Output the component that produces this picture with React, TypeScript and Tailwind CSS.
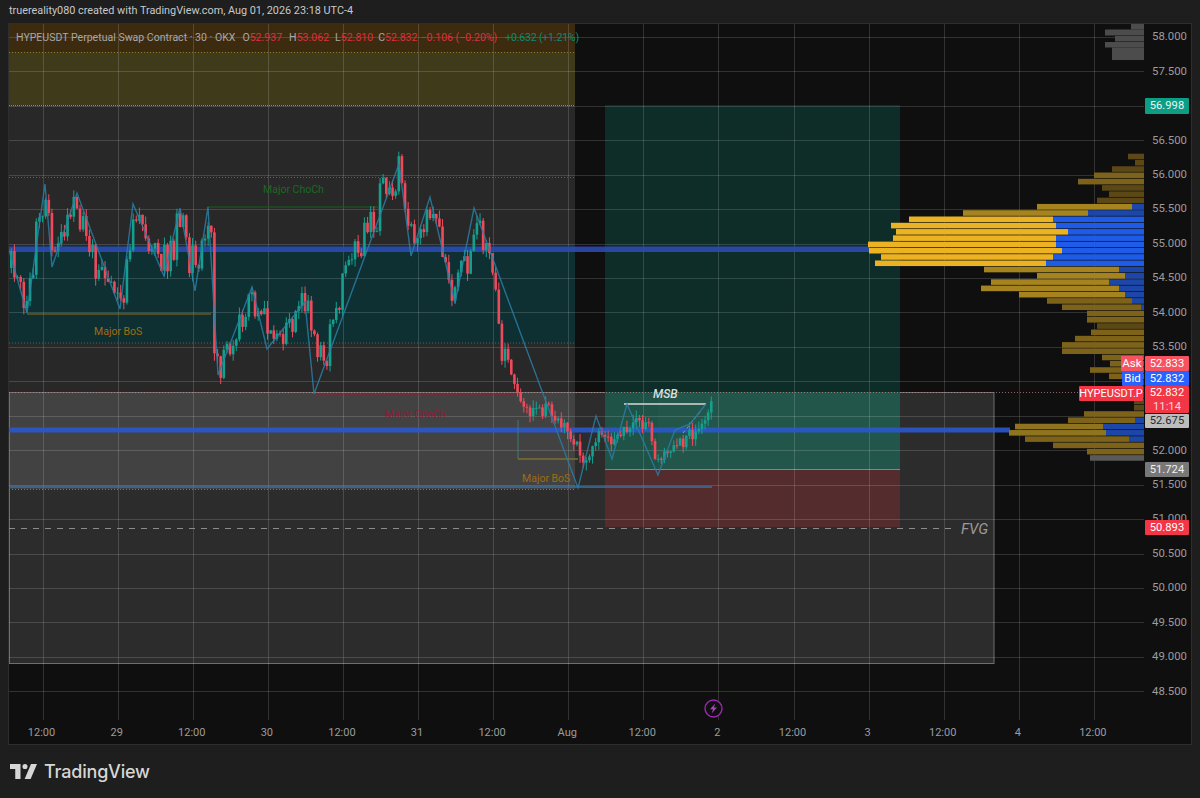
import React from 'react';

const yOf = (p: number) => 243.5 + (55 - p) * 68.9;

const priceTicks = ['58.000', '57.500', '57.000', '56.500', '56.000', '55.500', '55.000', '54.500', '54.000', '53.500', '53.000', '52.500', '52.000', '51.500', '51.000', '50.500', '50.000', '49.500', '49.000', '48.500'];
// these sit under a label in the picture
const coveredTicks = ['57.000', '53.000', '52.500'];
const timeTicks = ['12:00', '29', '12:00', '30', '12:00', '31', '12:00', 'Aug', '12:00', '2', '12:00', '3', '12:00', '4', '12:00'];
const gridX = timeTicks.map((_, i) => 42.5 + i * 75.1);

// close prices read off the chart, as [x, y] in page pixels
const track: [number, number][] = [
  [10, 268], [16, 282], [22, 290], [27, 300], [33, 258], [36, 225], [44, 205], [48, 198], [52, 255], [56, 260], [62, 225], [68, 210], [76, 203], [80, 222],
  [88, 235], [92, 265], [100, 265], [105, 280], [110, 290], [118, 298], [122, 290], [128, 260], [133, 225], [140, 215], [145, 240], [150, 250], [155, 232],
  [160, 260], [168, 255], [172, 245], [178, 220], [183, 235], [188, 260], [195, 262], [205, 245], [210, 228], [212, 320], [214, 360], [218, 372], [224, 345],
  [232, 335], [240, 315], [248, 305], [254, 300], [262, 315], [270, 322], [280, 333], [290, 330], [296, 322], [302, 305], [308, 312], [314, 350], [322, 365],
  [328, 340], [336, 310], [342, 270], [348, 255], [354, 245], [360, 245], [370, 225], [376, 215], [382, 180], [390, 183], [398, 172], [402, 205], [408, 235],
  [414, 238], [420, 230], [426, 215], [432, 200], [436, 215], [440, 245], [444, 265], [450, 285], [455, 297], [460, 275], [468, 260], [474, 225], [480, 235],
  [486, 258], [492, 280], [496, 320], [500, 350], [506, 345], [510, 365], [516, 395], [522, 403], [530, 410], [540, 410], [550, 410], [560, 425], [570, 435],
  [578, 452], [584, 460], [590, 450], [596, 430], [604, 440], [612, 445], [620, 435], [630, 425], [640, 420], [650, 432], [655, 458], [660, 465], [668, 450], [680, 442],
  [690, 436], [698, 425], [704, 415], [707, 395], [709, 383], [712, 388],
];

const at = (x: number) => {
  for (let i = 1; i < track.length; i++) {
    if (x <= track[i][0]) {
      const [x0, y0] = track[i - 1];
      const [x1, y1] = track[i];
      return y0 + ((y1 - y0) * (x - x0)) / (x1 - x0);
    }
  }
  return track[track.length - 1][1];
};

let seed = 71;
const rnd = () => {
  seed = (seed * 16807) % 2147483647;
  return seed / 2147483647;
};

const candles: { x: number; open: number; close: number; high: number; low: number }[] = [];
let last = 268;
for (let x = 10; x <= 712; x += 3.125) {
  const spread = x > 510 && x < 700 ? 16 : 34;
  const close = at(x) + (rnd() - 0.5) * spread;
  candles.push({ x, open: last, close, high: Math.min(last, close) - rnd() * 8, low: Math.max(last, close) + rnd() * 8 });
  last = close;
}

const zigzag = '9,250 27,313 45,184 52,267 77,193 120,309 133,204 164,276 180,208 195,291 208,207 218,375 252,287 267,349 305,302 314,394 399,164 411,256 430,197 455,303 474,208 578,488 596,416 612,459 627,404 658,475 675,430 690,424 706,404';

// volume profile rows from the top: left edge, start of the blue part, tone
const hi = '#ebb222';
const mid = '#a5841f';
const low = '#7d621a';
const dark = '#5c4816';
const rows: [number, number | null, string][] = [
  [1128, null, dark], [1135, null, dark], [1112, null, dark], [1094, null, low], [1078, null, low], [1102, null, dark], [1109, null, dark], [1097, null, dark],
  [1037, 1132, mid], [963, 1088, mid], [909, 1053, hi], [891, 1056, hi], [896, 1068, hi], [893, 1056, hi], [868, 1056, hi], [869, 1062, hi], [881, 1053, hi], [875, 1046, hi],
  [984, 1119, mid], [1037, 1125, mid], [991, 1109, mid], [981, 1119, mid], [1019, 1125, mid], [1047, 1132, low], [1062, 1141, low],
  [1087, null, low], [1087, null, low], [1097, null, dark], [1091, null, low], [1075, null, low], [1062, null, low], [1062, null, low],
  [1102, null, low], [1110, null, low], [1090, null, low], [1109, null, low], [1130, null, dark], [1115, null, dark], [1120, null, dark], [1134, null, dark], [1134, null, dark],
  [1084, null, low], [1068, 1135, low], [1015, 1103, '#8f7420'], [1009, 1106, '#8f7420'], [1025, 1129, low], [1053, null, low], [1087, null, low], [1090, null, '#5a5a5a'],
];
const greyRows: [number, number, number][] = [
  [24, 5.5, 1131], [29.5, 6, 1105], [36, 5.5, 1115], [42, 5.5, 1105], [47.5, 12.5, 1112],
];

const Chart = () => (
  <svg className="absolute inset-0 w-[1135px] h-[696px]" viewBox="9 24 1135 696">
    {/* zones */}
    <rect x="9" y="24" width="566" height="28" fill="#3d2b10" />
    <rect x="9" y="52" width="566" height="53" fill="#3f3a1a" />
    <rect x="9" y="105" width="566" height="384" fill="#282828" />
    <rect x="9" y="246" width="566" height="97" fill="#0e3033" />
    <rect x="605" y="105" width="295" height="364" fill="#0e2c28" />
    <rect x="9.5" y="392.5" width="984.5" height="271" fill="#ffffff" fillOpacity="0.12" stroke="#6e6e6e" />
    <rect x="605" y="392" width="295" height="77" fill="#1f5348" />
    <rect x="658" y="392" width="242" height="77" fill="#ffffff" fillOpacity="0.02" />
    <rect x="605" y="469" width="295" height="58" fill="#542c2e" />
    <line x1="605" x2="900" y1="469.5" y2="469.5" stroke="#7d8a86" />

    {/* grid */}
    {priceTicks.map((p) => (
      <line key={p} x1="9" x2="1144" y1={Math.round(yOf(parseFloat(p))) + 0.5} y2={Math.round(yOf(parseFloat(p))) + 0.5} stroke="#ffffff" strokeOpacity="0.15" />
    ))}
    {gridX.map((x) => (
      <line key={x} x1={Math.round(x) + 0.5} x2={Math.round(x) + 0.5} y1="24" y2="720" stroke="#ffffff" strokeOpacity="0.15" />
    ))}

    {/* zone borders */}
    <line x1="9" x2="575" y1="52.5" y2="52.5" stroke="#8d7d24" strokeDasharray="1 2" />
    <line x1="9" x2="575" y1="105.5" y2="105.5" stroke="#8a8a8a" strokeDasharray="1 1" />
    <line x1="9" x2="575" y1="177.5" y2="177.5" stroke="#5c5c5c" strokeDasharray="1 2" />
    <line x1="9" x2="575" y1="343" y2="343" stroke="#5c5c5c" strokeDasharray="1 2" />
    <line x1="9" x2="575" y1="489.5" y2="489.5" stroke="#777777" strokeDasharray="1 2" />
    <line x1="9" x2="1144" y1="392.5" y2="392.5" stroke="#c98a8a" strokeOpacity="0.7" strokeDasharray="1 2" />

    {/* key levels */}
    <rect x="9" y="246.5" width="860" height="5.5" fill="#2c4ab0" fillOpacity="0.9" />
    <rect x="9" y="427.5" width="1001" height="5" fill="#2a58cc" fillOpacity="0.9" />
    <line x1="9" x2="712" y1="487" y2="487" stroke="#3d6fa0" strokeWidth="1.5" />
    <line x1="9" x2="955" y1="528.5" y2="528.5" stroke="#8c8c8c" strokeDasharray="6 6" />

    {/* structure lines */}
    <line x1="207" x2="378" y1="207" y2="207" stroke="#14631c" strokeWidth="1.2" />
    <line x1="27" x2="211" y1="314" y2="314" stroke="#9a6a10" strokeWidth="1.2" />
    <line x1="315" x2="520" y1="394.5" y2="394.5" stroke="#8a1f3a" strokeOpacity="0.6" />
    <polyline points="518,420 518,459 578,459" fill="none" stroke="#3f7d72" />
    <line x1="518" x2="578" y1="459" y2="459" stroke="#9a6a10" strokeWidth="1.2" />
    <line x1="624" x2="706" y1="404" y2="404" stroke="#d8d8d8" strokeWidth="1.5" />
    <line x1="683" x2="700" y1="433" y2="412" stroke="#9a9a9a" strokeDasharray="3 3" />

    {/* candles */}
    {candles.map((c) => {
      const color = c.close <= c.open ? '#14a08e' : '#ee4a5c';
      const top = Math.min(c.open, c.close);
      return (
        <g key={c.x} fill={color}>
          <rect x={c.x + 0.8} y={c.high} width="1" height={c.low - c.high} />
          <rect x={c.x} y={top} width="2.6" height={Math.max(1, Math.abs(c.close - c.open))} />
        </g>
      );
    })}
    <polyline points={zigzag} fill="none" stroke="#2a7ca3" strokeWidth="1.4" strokeOpacity="0.85" />

    {/* volume profile */}
    {greyRows.map(([y, h, x]) => (
      <rect key={y} x={x} y={y} width={1144 - x} height={h} fill="#4c4c4c" />
    ))}
    {rows.map(([left, blue, tone], i) => {
      const y = 153.7 + i * 6.28;
      const right = blue ?? 1144;
      const bright = tone === hi;
      return (
        <g key={i}>
          <rect x={left} y={y} width={right - left} height="5.6" fill={tone} />
          {blue !== null && <rect x={blue} y={y} width={1144 - blue} height="5.6" fill={bright ? '#1e5be6' : '#1c46a8'} />}
        </g>
      );
    })}
  </svg>
);

const priceTag = 'w-[44px] flex items-center justify-center text-[11.2px] leading-none rounded-[1px]';

export default function App() {
  return (
    <div className="w-[1200px] h-[798px] flex flex-col bg-[#1e1e1e] overflow-hidden font-['Roboto',sans-serif]">
      <div className="h-[23px] pl-[9px] flex items-center text-[10.85px] text-[#c8c8c8]">
        truereality080 created with TradingView.com, Aug 01, 2026 23:18 UTC-4
      </div>

      <div className="ml-2 w-[1184px] h-[722px] border border-[#2e2e2e] bg-[#0f0f0f] relative overflow-hidden">
        <div className="flex h-[696px]">
          <div className="relative w-[1135px]">
            <Chart />
            <div className="absolute left-[7px] top-[7px] flex text-[10.55px] leading-[13px] text-[#a8a8a8] whitespace-nowrap">
              <span>HYPEUSDT Perpetual Swap Contract · 30 · OKX</span>
              <span className="ml-[7px]">O<span className="text-[#d9303f]">52.937</span></span>
              <span className="ml-[7px]">H<span className="text-[#d9303f]">53.062</span></span>
              <span className="ml-[6px]">L<span className="text-[#d9303f]">52.810</span></span>
              <span className="ml-[5px]">C<span className="text-[#d9303f]">52.832</span></span>
              <span className="ml-[3px] text-[#d9303f]">−0.106 (−0.20%)</span>
              <span className="ml-[8px] text-[#0a8a74] tracking-[-0.2px]">+0.632 (+1.21%)</span>
            </div>
            <span className="absolute left-[254px] top-[159px] text-[10.5px] leading-[13px] text-[#1a6a22]">Major ChoCh</span>
            <span className="absolute left-[85px] top-[301px] text-[10.5px] leading-[13px] text-[#a06c12]">Major BoS</span>
            <span className="absolute left-[376px] top-[384px] text-[10.5px] leading-[13px] text-[#8a1f3a]">Major ChoCh</span>
            <span className="absolute left-[513px] top-[448px] text-[10.5px] leading-[13px] text-[#a06c12]">Major BoS</span>
            <span className="absolute left-[644px] top-[363px] text-[12px] leading-[14px] italic font-medium text-[#dedede]">MSB</span>
            <span className="absolute left-[952px] top-[496px] text-[15px] leading-[18px] italic text-[#9a9a9a]">FVG</span>
            <svg className="absolute left-[695px] top-[675px] w-[19px] h-[19px]" viewBox="0 0 19 19">
              <circle cx="9.5" cy="9.5" r="8.5" fill="#0f0f0f" stroke="#9c27b0" strokeWidth="1.4" />
              <path d="M11.2 4.6 6 10.3h3l-1.4 4.1 5.3-5.8H9.8z" fill="#ab47bc" />
            </svg>
          </div>
          <div className="w-[47px] flex flex-col mt-[-4.4px] text-[11.4px] text-[#9c9c9c]">
            {priceTicks.map((p) => (
              <div key={p} className="h-[34.45px] shrink-0 flex items-center pl-[8px]">{coveredTicks.includes(p) ? '' : p}</div>
            ))}
          </div>
        </div>

        <div className="flex ml-[-5px] h-[24px] pt-[2px] items-center text-[11px] text-[#9c9c9c]">
          {timeTicks.map((t, i) => (
            <div key={i} className="w-[75.1px] shrink-0 text-center">{t}</div>
          ))}
        </div>

        {/* labels over the price axis */}
        <div className={`${priceTag} absolute left-[1136px] top-[74px] h-[16px] bg-[#0d9d85] text-[#e8f5f2]`}>56.998</div>
        <div className="absolute right-[2px] top-[332px] flex flex-col items-end">
          <div className="flex gap-[2px] h-[15px]">
            <div className="w-[22px] flex items-center justify-center text-[11.5px] leading-none bg-[#f7525f] text-white rounded-[1px]">Ask</div>
            <div className={`${priceTag} bg-[#f7525f] text-white`}>52.833</div>
          </div>
          <div className="flex gap-[2px] h-[15px]">
            <div className="w-[21px] flex items-center justify-center text-[11.5px] leading-none bg-[#2962ff] text-white rounded-[1px]">Bid</div>
            <div className={`${priceTag} bg-[#2962ff] text-white`}>52.832</div>
          </div>
          <div className="flex gap-[2px] items-start">
            <div className="w-[64px] h-[15px] flex items-center justify-center text-[11px] leading-none bg-[#f23645] text-white rounded-[1px]">HYPEUSDT.P</div>
            <div className={`${priceTag} h-[27px] flex-col gap-[2px] bg-[#f23645] text-white`}>
              <span>52.832</span>
              <span className="text-[#ffd5d8]">11:14</span>
            </div>
          </div>
          <div className={`${priceTag} h-[14px] mt-[1px] bg-[#bdbdbd] text-[#2a2a2a]`}>52.675</div>
          <div className={`${priceTag} h-[15px] mt-[34px] bg-[#787878] text-[#f0f0f0]`}>51.724</div>
          <div className={`${priceTag} h-[15px] mt-[43px] bg-[#f23645] text-white`}>50.893</div>
        </div>
      </div>

      <div className="flex-1 pl-[10px] flex items-center gap-[7px] text-[#d6d6d6]">
        <svg className="w-[27px] h-[15px]" viewBox="0 0 36 20" fill="currentColor">
          <path d="M14 0H0v6.5h7V20h7V0z" />
          <circle cx="20" cy="3.4" r="3.4" />
          <path d="M28 0h8l-8.5 20H19.5z" />
        </svg>
        <span className="text-[18px] font-['Inter',sans-serif] font-medium tracking-[-0.2px]">TradingView</span>
      </div>
    </div>
  );
}
